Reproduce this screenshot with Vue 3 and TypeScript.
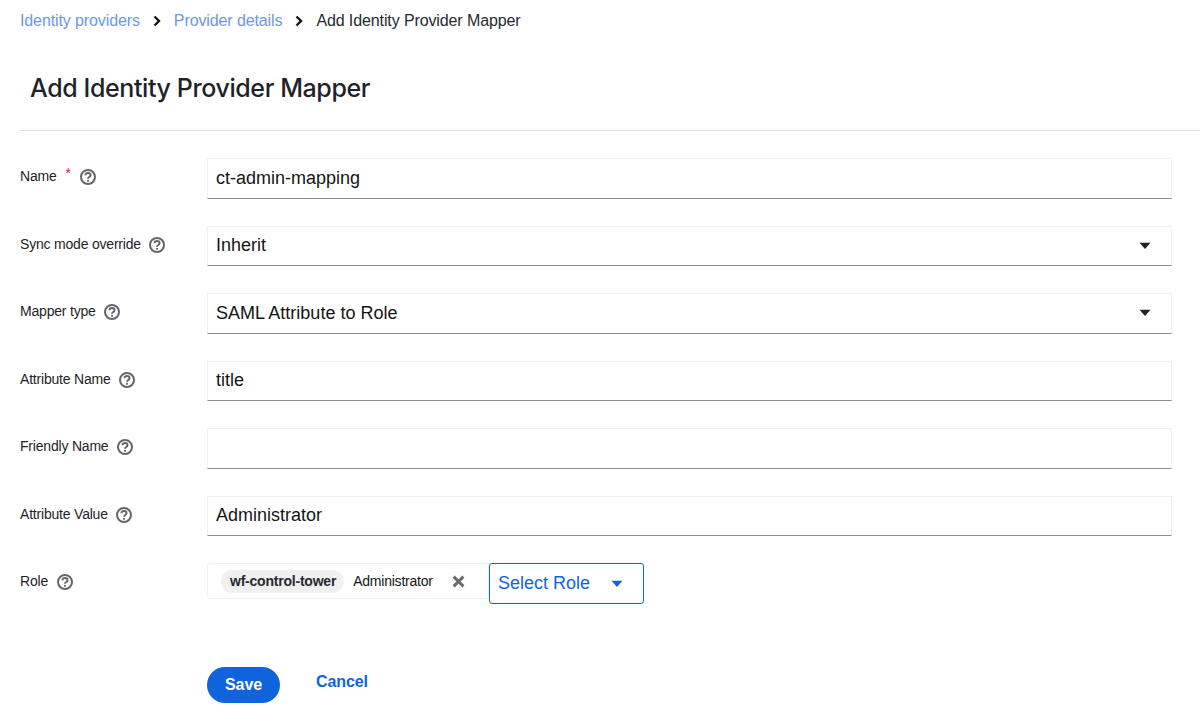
<script setup lang="ts">
const fields: { label: string, value: string, required?: boolean, select?: boolean }[] = [
    { label: 'Name', value: 'ct-admin-mapping', required: true },
    { label: 'Sync mode override', value: 'Inherit', select: true },
    { label: 'Mapper type', value: 'SAML Attribute to Role', select: true },
    { label: 'Attribute Name', value: 'title' },
    { label: 'Friendly Name', value: '' },
    { label: 'Attribute Value', value: 'Administrator' },
];
</script>

<template>
    <div class="page">
        <nav class="crumbs">
            <a class="crumb-link">Identity providers</a>
            <svg class="chevron" viewBox="0 0 10 12"><path d="M2.500 1.500 7 6l-4.500 4.500" /></svg>
            <a class="crumb-link">Provider details</a>
            <svg class="chevron" viewBox="0 0 10 12"><path d="M2.500 1.500 7 6l-4.500 4.500" /></svg>
            <span>Add Identity Provider Mapper</span>
        </nav>

        <h1 class="title">Add Identity Provider Mapper</h1>

        <form class="form">
            <div v-for="field in fields" :key="field.label" class="row">
                <div class="label">
                    <span>{{ field.label }}</span>
                    <span v-if="field.required" class="required">*</span>
                    <svg class="help" viewBox="0 0 16 16">
                        <circle cx="8" cy="8" r="7" />
                        <path d="M5.500 6.300C5.600 4.900 6.700 4.100 8 4.100c1.400 0 2.500.9 2.500 2.100 0 1.900-2.500 1.700-2.500 3.500" />
                        <circle class="dot" cx="8" cy="11.800" r="1.100" />
                    </svg>
                </div>
                <div class="control">
                    <span>{{ field.value }}</span>
                    <svg v-if="field.select" class="caret" viewBox="0 0 12 8"><path d="M0.500 0.800h11L6 7z" /></svg>
                </div>
            </div>

            <div class="row role-row">
                <div class="label">
                    <span>Role</span>
                    <svg class="help" viewBox="0 0 16 16">
                        <circle cx="8" cy="8" r="7" />
                        <path d="M5.500 6.300C5.600 4.900 6.700 4.100 8 4.100c1.400 0 2.500.9 2.500 2.100 0 1.900-2.500 1.700-2.500 3.500" />
                        <circle class="dot" cx="8" cy="11.800" r="1.100" />
                    </svg>
                </div>
                <div class="role">
                    <div class="role-value">
                        <span class="chip">wf-control-tower</span>
                        <span class="role-name">Administrator</span>
                        <svg class="remove" viewBox="0 0 12 12"><path d="M1.500 1.500l9 9M10.500 1.500l-9 9" /></svg>
                    </div>
                    <div class="role-select">
                        <span>Select Role</span>
                        <svg class="caret blue" viewBox="0 0 12 8"><path d="M0.500 0.800h11L6 7z" /></svg>
                    </div>
                </div>
            </div>

            <div class="actions">
                <button type="button" class="save">Save</button>
                <a class="cancel">Cancel</a>
            </div>
        </form>
    </div>
</template>

<style>
html, body {
    background: #fff;
}
</style>

<style scoped>
.page {
    height: 723px;
    overflow: hidden;
    padding-left: 20px;
    box-sizing: border-box;
    font-family: "Liberation Sans", Arial, sans-serif;
    color: #151515;
}

.crumbs {
    display: flex;
    align-items: center;
    height: 20px;
    margin-top: 11px;
    font-size: 16px;
    letter-spacing: -0.110px;
    color: #262a30;
}

.crumb-link {
    color: #6e96ea;
}

.chevron {
    width: 10px;
    height: 12px;
    margin: 0 12px 0 12px;
    fill: none;
    stroke: #151515;
    stroke-width: 2.400;
}

.title {
    margin: 0;
    padding: 40px 0 25px 10px;
    height: 34px;
    line-height: 34px;
    font-family: Inter, sans-serif;
    font-size: 25px;
    font-weight: 500;
    letter-spacing: -0.400px;
    color: #1f2329;
    border-bottom: 1px solid #e0e0e0;
}

.form {
    padding-top: 27px;
}

.row {
    display: flex;
    height: 40.500px;
    margin-bottom: 27px;
}

.label {
    display: flex;
    align-items: center;
    width: 187px;
    flex: none;
    font-size: 14px;
    letter-spacing: -0.200px;
    color: #1f2329;
    padding-bottom: 4px;
    box-sizing: border-box;
}

.required {
    margin-left: 9px;
    margin-bottom: 6px;
    color: #e0134a;
}

.help {
    width: 16px;
    height: 16px;
    margin: 2px 0 0 8.500px;
    fill: none;
    stroke: #63676c;
    stroke-width: 2;
}

.required + .help {
    margin-left: 9px;
}

.help .dot {
    fill: #63676c;
    stroke: none;
}

.control {
    width: 965px;
    display: flex;
    align-items: center;
    justify-content: space-between;
    box-sizing: border-box;
    padding: 0 20px 0 8px;
    font-size: 18px;
    border: 1px solid #f0f0f0;
    border-bottom: 1px solid #8a8d90;
}

.caret {
    width: 12px;
    height: 8px;
    fill: #1f2329;
}

.caret.blue {
    fill: #0f64de;
}

.role-row {
    height: 41px;
    margin-bottom: 0;
}

.role-row .label {
    padding-bottom: 5px;
}

.role {
    display: flex;
    align-items: flex-start;
}

.role-value {
    display: flex;
    align-items: center;
    width: 282px;
    height: 36px;
    box-sizing: border-box;
    padding-left: 13px;
    border: 1px solid #f0f0f0;
    border-radius: 3px 0 0 3px;
    font-size: 14px;
    letter-spacing: -0.220px;
}

.chip {
    display: flex;
    align-items: center;
    height: 23px;
    padding: 0 8px 0 9px;
    border-radius: 12px;
    background: #f0f0f0;
    font-weight: 700;
    color: #262a30;
}

.role-name {
    margin-left: 9px;
    color: #151515;
}

.remove {
    width: 13px;
    height: 13px;
    margin-left: 19.500px;
    fill: none;
    stroke: #6a6e73;
    stroke-width: 2.800;
}

.role-select {
    display: flex;
    align-items: center;
    width: 155px;
    height: 41px;
    box-sizing: border-box;
    padding-left: 8px;
    border: 1px solid #0f64de;
    border-radius: 3px;
    color: #0f64de;
    font-size: 18px;
}

.role-select .caret {
    margin-left: 21px;
}

.actions {
    display: flex;
    align-items: flex-start;
    padding: 63px 0 0 187px;
}

.save {
    width: 73px;
    height: 36px;
    border: none;
    border-radius: 18px;
    background: #0f64de;
    color: #fff;
    font: 700 16px "Liberation Sans", Arial, sans-serif;
    letter-spacing: -0.100px;
    padding: 0;
}

.cancel {
    margin-left: 36px;
    margin-top: 6px;
    color: #0f64de;
    font-size: 16px;
    font-weight: 700;
    letter-spacing: -0.100px;
}
</style>
